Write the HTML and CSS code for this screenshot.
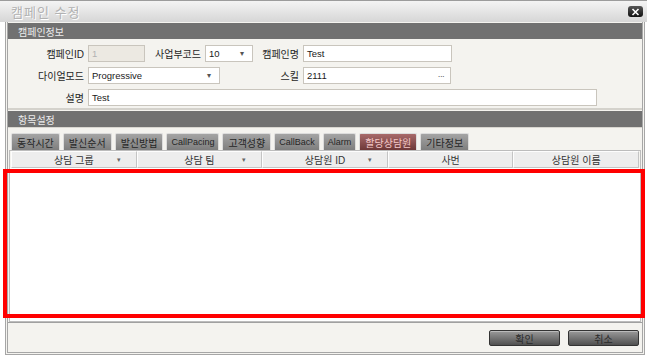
FILE: index.html
```html
<!DOCTYPE html>
<html lang="ko">
<head>
  <meta charset="UTF-8">
  <title>캠페인 수정</title>
  <link rel="stylesheet" href="styles.css">
</head>
<body>
  <div class="titlebar">
    <span class="title">캠페인 수정</span>
    <span class="close-btn">
      <svg width="11" height="8" viewBox="0 0 11 8"><path d="M2.5 1 L8.5 7 M8.5 1 L2.5 7" stroke="#fff" stroke-width="1.6"/></svg>
    </span>
  </div>

  <div class="frame">
    <div class="section-head">캠페인정보</div>

    <div class="form">
      <div class="row">
        <label class="lbl">캠페인ID</label>
        <div class="field disabled w-id">1</div>
        <label class="lbl w-l2">사업부코드</label>
        <div class="field select w-code"><span>10</span><span class="arrow">▾</span></div>
        <label class="lbl w-l3">캠페인명</label>
        <div class="field w-name">Test</div>
      </div>
      <div class="row">
        <label class="lbl">다이얼모드</label>
        <div class="field select w-mode"><span>Progressive</span><span class="arrow">▾</span></div>
        <label class="lbl w-l4">스킬</label>
        <div class="field select w-skill"><span>2111</span><span class="dots">···</span></div>
      </div>
      <div class="row">
        <label class="lbl">설명</label>
        <div class="field w-desc">Test</div>
      </div>
    </div>

    <div class="section-head">항목설정</div>

    <div class="tabs">
      <span class="tab">동작시간</span>
      <span class="tab">발신순서</span>
      <span class="tab">발신방법</span>
      <span class="tab en">CallPacing</span>
      <span class="tab">고객성향</span>
      <span class="tab en">CallBack</span>
      <span class="tab en">Alarm</span>
      <span class="tab active">할당상담원</span>
      <span class="tab">기타정보</span>
    </div>

    <div class="grid">
      <div class="grid-head">
        <div class="col">상담 그룹<span class="filter">▾</span></div>
        <div class="col">상담 팀<span class="filter">▾</span></div>
        <div class="col">상담원 ID<span class="filter">▾</span></div>
        <div class="col">사번</div>
        <div class="col">상담원 이름</div>
      </div>
      <div class="grid-body"></div>
    </div>

    <div class="footer">
      <button class="btn">확인</button>
      <button class="btn">취소</button>
    </div>
  </div>

  <div class="highlight"></div>
</body>
</html>
```

FILE: styles.css
```css
* {
  margin: 0;
  padding: 0;
  box-sizing: border-box;
}

body {
  width: 647px;
  height: 355px;
  overflow: hidden;
  position: relative;
  background: #fff;
  font-family: "Liberation Sans", "Noto Sans CJK KR", sans-serif;
  font-size: 10px;
  color: #222;
}

/* title bar */
.titlebar {
  height: 22px;
  display: flex;
  align-items: center;
  justify-content: space-between;
  padding: 0 4px 0 11px;
  background: linear-gradient(#f4f4f4, #d6d6d6);
  border-top: 1px solid #9c9c9c;
}

.title {
  font-size: 13px;
  color: #b2b2b2;
  letter-spacing: 1px;
  text-shadow: 1px 1px 0 #fff;
}

.close-btn {
  width: 15px;
  height: 11px;
  display: flex;
  align-items: center;
  justify-content: center;
  background: linear-gradient(#555, #111);
  border-radius: 3px;
}

/* dialog frame */
.frame {
  margin: 0 2px 0 5px;
  height: 333px;
  display: flex;
  flex-direction: column;
  background: #f4f3ef;
  border-left: 3px double #a6a6a6;
  border-right: 3px double #a6a6a6;
  border-bottom: 3px double #a6a6a6;
}

.section-head {
  height: 16px;
  margin-top: 1px;
  padding-left: 10px;
  display: flex;
  align-items: center;
  background: #717171;
  color: #ececec;
  font-size: 10px;
}

/* form */
.form {
  display: flex;
  flex-direction: column;
  gap: 5px;
  padding: 6px 0 2px;
  border-bottom: 2px solid #d4d2cc;
}

.row {
  display: flex;
  align-items: center;
  height: 17px;
}

.lbl {
  width: 76px;
  text-align: right;
  margin-right: 4px;
  font-size: 10px;
  color: #1e1e1e;
}

.lbl.w-l2 { width: 50px; margin-left: 6px; }
.lbl.w-l3 { width: 41px; margin-left: 5px; }
.lbl.w-l4 { width: 79px; }

.field {
  height: 17px;
  display: flex;
  align-items: center;
  justify-content: space-between;
  padding: 0 4px 0 3px;
  background: #fff;
  border: 1px solid #c9c5bd;
  font-size: 9.5px;
  color: #1a1a1a;
}

.field.disabled {
  background: #ece9e2;
  color: #b2b2b2;
}

.arrow {
  font-size: 8px;
  color: #555;
  margin-right: 4px;
}

.dots {
  color: #666;
  letter-spacing: -1px;
  margin-right: 2px;
}

.w-id { width: 57px; }
.w-code { width: 48px; }
.w-name { width: 149px; }
.w-mode { width: 132px; }
.w-skill { width: 148px; }
.w-desc { width: 509px; }

/* tabs */
.tabs {
  display: flex;
  align-items: flex-end;
  gap: 3px;
  height: 23px;
  padding: 0 0 0 3px;
  border-top: 1px solid #d8d6d0;
}

.tab {
  height: 17px;
  padding: 0 5px;
  display: flex;
  align-items: center;
  background: linear-gradient(#a4a4a4, #7e7e7e);
  border: 1px solid #dcdcdc;
  border-bottom: none;
  border-radius: 2px 2px 0 0;
  color: #262626;
  font-size: 10px;
}

.tab.en {
  padding: 0 4px;
  font-size: 9px;
}

.tab.active {
  background: linear-gradient(#a86a6a, #6e3838);
  color: #f3c8c8;
}

/* grid */
.grid {
  flex: 1;
  display: flex;
  flex-direction: column;
  margin: 0 1px;
  border: 1px solid #bcbcbc;
}

.grid-head {
  display: grid;
  grid-template-columns: repeat(5, 1fr);
  height: 17px;
  margin: 0 1px;
  background: #ededed;
}

.col {
  position: relative;
  display: flex;
  align-items: center;
  justify-content: center;
  border: 1px solid #fdfdfd;
  border-right-color: #c4c4c4;
  border-bottom-color: #c4c4c4;
  font-size: 10px;
  color: #333;
}

.filter {
  position: absolute;
  right: 15px;
  font-size: 7px;
  color: #666;
}

.grid-body {
  flex: 1;
  background: #fff;
}

/* footer */
.footer {
  height: 30px;
  display: flex;
  justify-content: flex-end;
  align-items: center;
  gap: 8px;
  padding-right: 3px;
  border-top: 1px solid #a0a0a0;
}

.btn {
  width: 71px;
  height: 16px;
  background: linear-gradient(#9a9a9a, #505050);
  border: 1px solid #333;
  border-radius: 2px;
  box-shadow: inset 0 1px 0 #bbb;
  color: #2a2a2a;
  font-family: "Liberation Sans", "Noto Sans CJK KR", sans-serif;
  font-size: 10px;
}

/* annotation box drawn over the grid */
.highlight {
  position: absolute;
  left: 3px;
  top: 169px;
  width: 642px;
  height: 149px;
  border: 4px solid #f00;
}
```
